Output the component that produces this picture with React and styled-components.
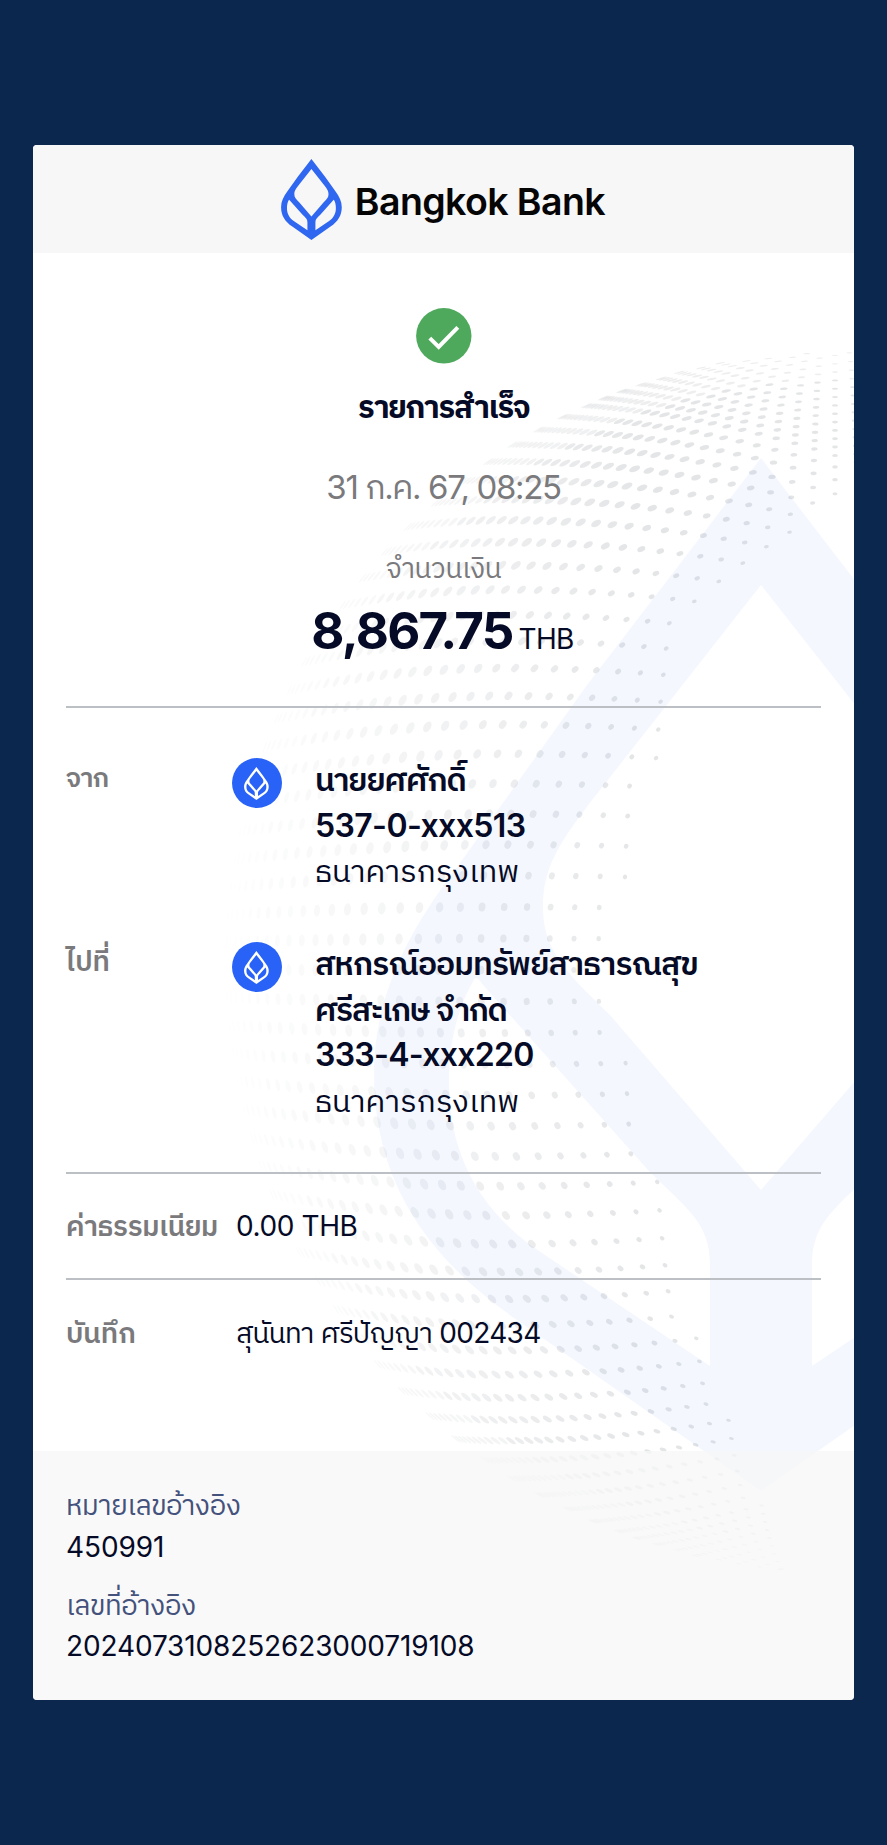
import React from 'react'
import styled, { createGlobalStyle } from 'styled-components'

const GlobalStyle = createGlobalStyle`
  * { box-sizing: border-box; }
  body {
    margin: 0;
    background: #0c274e;
    color: #050a26;
    font-family: Inter, 'IBM Plex Sans Thai', 'Noto Sans Thai', 'Noto Sans', sans-serif;
  }
`

const Page = styled.main`
  min-height: 1845px;
  padding: 145px 33px;
`

const Slip = styled.article`
  position: relative;
  overflow: hidden;
  border-radius: 4px;
  background: #fff;
`

const Header = styled.header`
  display: flex;
  align-items: center;
  height: 108px;
  padding-left: 248px;
  background: #f7f7f8;
`

const Brand = styled.span`
  margin-left: 13px;
  padding-top: 5px;
  color: #050505;
  font-size: 37.5px;
  font-weight: 600;
  line-height: 40px;
  letter-spacing: -0.6px;
`

const Watermark = styled.svg`
  position: absolute;
  top: 0;
  left: 0;
`

const Body = styled.div`
  position: relative;
  height: 1198px;
  padding: 55px 33px 0;
`

const Summary = styled.section`
  display: flex;
  flex-direction: column;
  align-items: center;
  padding-bottom: 45px;
`

const Text = styled.span`
  display: block;
  width: max-content;
  white-space: nowrap;
  color: ${p => p.$color || 'inherit'};
  font-size: ${p => p.$size || 28}px;
  font-weight: ${p => p.$weight || 400};
  line-height: ${p => p.$line || 40}px;
  letter-spacing: ${p => p.$track || 0}px;
  margin-top: ${p => p.$top || 0}px;
`

const Label = styled(Text)`
  color: #7a7a7d;
  font-weight: 600;
`

const Line = styled(Text)`
  font-size: ${p => p.$size || 32}px;
  font-weight: ${p => p.$weight || 600};
  line-height: 45.6px;
`

const Amount = styled.div`
  display: flex;
  align-items: baseline;
  gap: 6px;
  height: 60px;
  margin: 13px 2px 0 0;
`

const Rule = styled.hr`
  height: 2px;
  margin: ${p => p.$top || 0}px 0 0;
  border: 0;
  background: #bcbfc4;
`

const Party = styled.section`
  display: grid;
  grid-template-columns: 165.5px 50px 1fr;
  margin-top: ${p => p.$top}px;
`

const Badge = styled.span`
  display: flex;
  align-items: center;
  justify-content: center;
  width: 50px;
  height: 50px;
  margin-top: 1px;
  border-radius: 50%;
  background: #2962f6;
`

const Lines = styled.div`
  padding-left: 33.5px;
`

const Field = styled.section`
  display: grid;
  grid-template-columns: 170px 1fr;
  align-items: center;
  height: 104.5px;
  padding-top: 1px;
`

const Footer = styled.footer`
  position: relative;
  height: 249px;
  padding: 34px 33px 0;
  background: rgba(247, 247, 247, 0.75);
`

const GREY = '#7a7a7d'
const SLATE = '#44527c'

const LOTUS = [
  'M388 0L562 227L694 412C746 480 775 545 775 615C775 720 726 797 632 862L388 1033L144 862C50 797 1 720 1 615C1 545 30 480 82 412L214 227Z',
  'M388 127L227 332C185 385 170 410 170 449C170 490 190 512 237 557L388 732L539 557C586 512 606 490 606 449C606 410 591 385 549 332Z',
  'M102 520C84 550 76 585 76 625C76 700 110 757 172 797L337 908V807C337 765 315 752 275 712L110 527Q105 519 102 520Z',
  'M674 520C692 550 700 585 700 625C700 700 666 757 604 797L439 908V807C439 765 461 752 501 712L666 527Q671 519 674 520Z'
].join('')

const Lotus = ({ height, color }) => (
  <svg width={height * 0.7512} height={height} viewBox="0 0 776 1033">
    <path d={LOTUS} fill={color} fillRule="evenodd" />
  </svg>
)

// globe of dots, in slip coordinates
const CX = 802
const CY = 817
const R = 613

// the dots die out towards this edge: [y, x]
const EDGE = [[200, 860], [335, 832], [410, 727], [460, 660], [555, 635], [695, 610], [785, 585], [885, 580], [968, 612], [1105, 645], [1168, 656], [1285, 703], [1322, 715], [1415, 750], [1460, 790]]

const edgeAt = y => {
  for (let i = 1; i < EDGE.length; i++) {
    const [y0, x0] = EDGE[i - 1]
    const [y1, x1] = EDGE[i]
    if (y <= y1) return x0 + (x1 - x0) * (y - y0) / (y1 - y0)
  }
  return 790
}

// height of a row over the middle, rows past the pole go on in small steps
const rise = i => {
  const n = Math.abs(i)
  const v = n <= 23 ? Math.sin(n * 0.0515) : Math.sin(23 * 0.0515) + (n - 23) * 0.015
  return i < 0 ? -v : v
}

const makeDots = () => {
  const dots = []
  for (let i = -38; i <= 38; i++) {
    for (let j = -3; j <= 35; j++) {
      const s = Math.sin(j * 0.044)
      let x = 600
      let y = CY
      for (let k = 0; k < 12; k++) {
        const bend = (x < 470 ? 0.6 : 0.32) * ((x - 470) / R) ** 2
        y = CY + 8 + R * rise(i) * (1 - bend)
        const half = Math.sqrt(Math.max(0, R * R - (y - CY) ** 2))
        // keeps the columns apart near the poles
        const spread = (R - half) * 0.5 * s * (1 - Math.abs(s))
        x = (x + CX - half * s - spread) / 2
      }
      const d = Math.hypot(x - CX, y - CY) / R
      const room = edgeAt(y) - x
      if (d > 0.995 || Math.abs(y - CY) > R || room < 0 || x > 830) continue
      const size = 2.2 + Math.min(3.6, room / 70)
      dots.push({
        x,
        y,
        rx: Math.max(0.6, size * Math.sqrt(1 - d * d)),
        ry: size * 1.05,
        turn: Math.atan2(y - CY, x - CX) * 180 / Math.PI,
        fade: Math.max(0.07, Math.min(1, (x - 150) / 450)) ** 1.2 * (d > 0.95 ? 0.65 : 1)
      })
    }
  }
  return dots
}

const dots = makeDots()

const Backdrop = () => (
  <Watermark width="821" height="1555" viewBox="0 0 821 1555">
    <path d={LOTUS} fill="#f4f7fe" fillRule="evenodd" transform="translate(340 313)" />
    {dots.map((dot, i) => (
      <ellipse
        key={i}
        rx={dot.rx.toFixed(2)}
        ry={dot.ry.toFixed(2)}
        fill="#5a5f6a"
        fillOpacity={(0.16 * dot.fade).toFixed(3)}
        transform={`translate(${dot.x.toFixed(1)} ${dot.y.toFixed(1)}) rotate(${dot.turn.toFixed(1)})`}
      />
    ))}
  </Watermark>
)

const Check = () => (
  <svg width="56" height="56" viewBox="0 0 56 56">
    <circle cx="27.8" cy="27.8" r="27.7" fill="#4fa95d" />
    <path d="M13.8 30.2L22.7 39L41.8 19.4" fill="none" stroke="#fff" strokeWidth="4" />
  </svg>
)

export default function App () {
  return (
    <Page>
      <GlobalStyle />
      <Slip>
        <Backdrop />
        <Header>
          <Lotus height={81} color="#2f67f0" />
          <Brand>Bangkok Bank</Brand>
        </Header>
        <Body>
          <Summary>
            <Check />
            <Text $size={31} $weight={700} $line={46} $top={20} $track={-1.4}>รายการสำเร็จ</Text>
            <Text $size={33} $color={GREY} $top={37} $track={-1.35}>31 ก.ค. 67, 08:25</Text>
            <Text $color={GREY} $top={41} $track={-0.45}>จำนวนเงิน</Text>
            <Amount>
              <Text $size={51} $weight={700} $line={60} $track={-1.7}>8,867.75</Text>
              <Text $track={-0.7}>THB</Text>
            </Amount>
          </Summary>
          <Rule />
          <Party $top={49}>
            <Label $size={26.5} $track={-0.9}>จาก</Label>
            <Badge><Lotus height={33} color="#fff" /></Badge>
            <Lines>
              <Line $track={-1.1}>นายยศศักดิ์</Line>
              <Line $track={-0.6}>537-0-xxx513</Line>
              <Line $size={31} $weight={400} $track={0.1}>ธนาคารกรุงเทพ</Line>
            </Lines>
          </Party>
          <Party $top={47.5}>
            <Label $track={0.1}>ไปที่</Label>
            <Badge><Lotus height={33} color="#fff" /></Badge>
            <Lines>
              <Line $track={-0.97}>สหกรณ์ออมทรัพย์สาธารณสุข</Line>
              <Line $track={-1.5}>ศรีสะเกษ จำกัด</Line>
              <Line $track={-0.7}>333-4-xxx220</Line>
              <Line $size={31} $weight={400} $track={0.1}>ธนาคารกรุงเทพ</Line>
            </Lines>
          </Party>
          <Rule $top={48} />
          <Field>
            <Label $track={-0.45}>ค่าธรรมเนียม</Label>
            <Text $track={-0.4}>0.00 THB</Text>
          </Field>
          <Rule />
          <Field>
            <Label>บันทึก</Label>
            <Text $track={-0.7}>สุนันทา ศรีปัญญา 002434</Text>
          </Field>
        </Body>
        <Footer>
          <Text $line={41.5} $color={SLATE} $track={-0.6}>หมายเลขอ้างอิง</Text>
          <Text $line={41.5} $track={-0.1}>450991</Text>
          <Text $line={41.5} $top={16.5} $color={SLATE} $track={-0.6}>เลขที่อ้างอิง</Text>
          <Text $line={41.5} $track={-0.14}>2024073108252623000719108</Text>
        </Footer>
      </Slip>
    </Page>
  )
}
